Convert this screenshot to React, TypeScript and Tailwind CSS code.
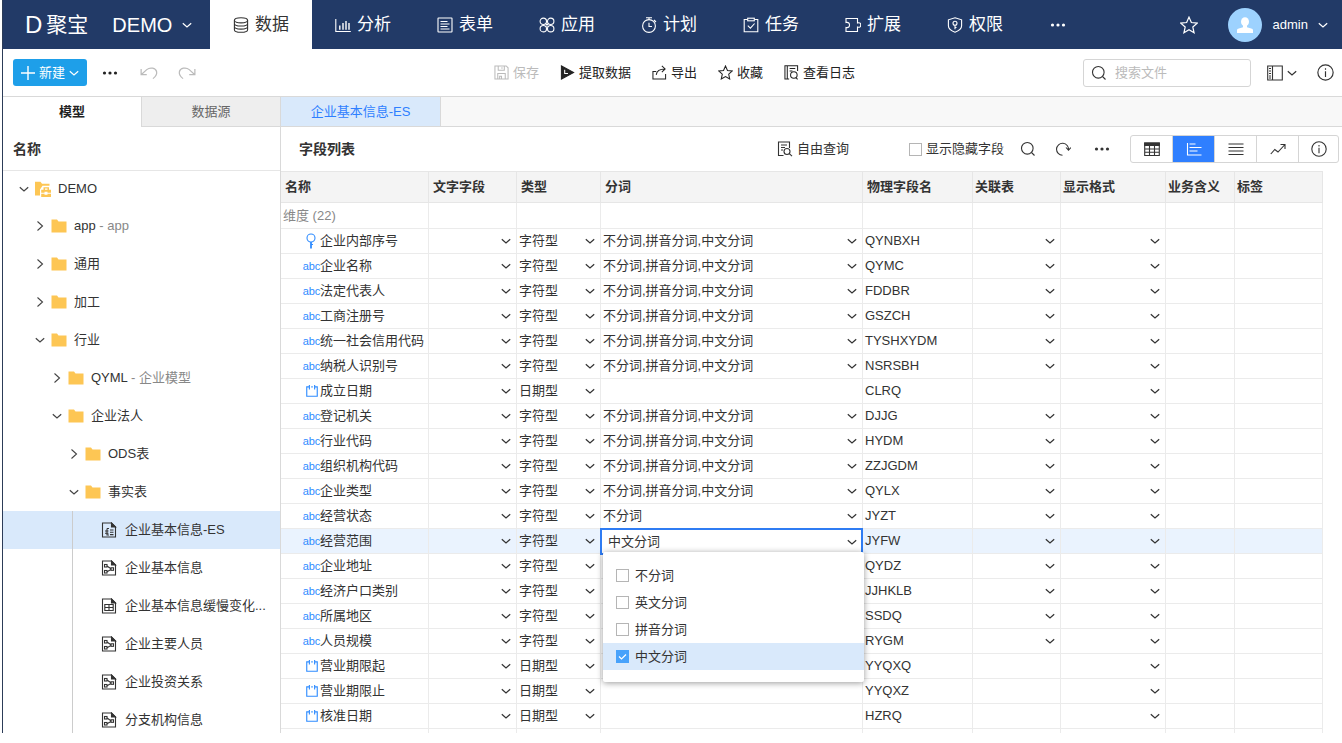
import type { ReactNode } from "react";
import clsx from "clsx";

type IconProps = {
  className?: string;
  children?: ReactNode;
};

const Icon = ({ className = "size-4", children }: IconProps) => (
  <svg
    viewBox="0 0 16 16"
    fill="none"
    stroke="currentColor"
    strokeWidth="1.1"
    aria-hidden="true"
    className={clsx("shrink-0", className)}
  >
    {children}
  </svg>
);

const ChevronDown = ({ className = "size-2.5" }: IconProps) => (
  <svg
    viewBox="0 0 10 10"
    fill="none"
    stroke="currentColor"
    strokeWidth="1.2"
    aria-hidden="true"
    className={clsx("shrink-0", className)}
  >
    <path d="M.8 3.2L5 7l4.2-3.800" />
  </svg>
);

const ChevronRight = () => (
  <svg
    viewBox="0 0 10 10"
    fill="none"
    stroke="currentColor"
    strokeWidth="1.1"
    aria-hidden="true"
    className="size-2.5 shrink-0"
  >
    <path d="M2.500.5L7.500 5l-5 4.500" />
  </svg>
);

const DotsIcon = () => (
  <Icon>
    <g fill="currentColor" stroke="none">
      <circle cx="2.5" cy="8" r="1.6" />
      <circle cx="8" cy="8" r="1.6" />
      <circle cx="13.5" cy="8" r="1.6" />
    </g>
  </Icon>
);

const StarIcon = ({ className }: IconProps) => (
  <Icon className={className}>
    <path d="M8 1l2.1 4.8 5.2.5-3.9 3.5 1.1 5.1L8 12.3l-4.5 2.6 1.1-5.1L.7 6.3l5.2-.5z" />
  </Icon>
);

const SearchIcon = () => (
  <Icon>
    <circle cx="7.3" cy="7.3" r="5.8" />
    <path d="M11.5 11.5l3 3" />
  </Icon>
);

const InfoIcon = ({ className }: IconProps) => (
  <Icon className={className}>
    <circle cx="8" cy="8" r="7.2" />
    <path d="M8 6.8v5.4M8 4v1.4" />
  </Icon>
);

const navItems = [
  {
    label: "数据",
    active: true,
    icon: (
      <>
        <ellipse cx="8" cy="3.3" rx="6.6" ry="2.6" />
        <path d="M1.4 3.3v9.4c0 1.4 3 2.6 6.6 2.6s6.6-1.2 6.6-2.6V3.3M1.4 6.4c0 1.4 3 2.6 6.6 2.6s6.6-1.2 6.6-2.6M1.4 9.5c0 1.4 3 2.6 6.6 2.6s6.6-1.2 6.6-2.6" />
      </>
    ),
  },
  {
    label: "分析",
    icon: (
      <>
        <path d="M.8 2v12.5h15" />
        <path d="M4.8 8.5v4.3M8 6v6.8M11 4v8.800M14 6v6.800" strokeWidth="1.4" />
      </>
    ),
  },
  {
    label: "表单",
    icon: (
      <>
        <rect x="1" y="1" width="14" height="14" rx=".5" />
        <path d="M3.5 4.500h7M3.500 7h9M3.500 9.500h7M3.500 12h9" />
      </>
    ),
  },
  {
    label: "应用",
    icon: (
      <>
        <circle cx="4.3" cy="4.3" r="3.2" />
        <circle cx="11.7" cy="4.3" r="3.2" />
        <circle cx="4.3" cy="11.7" r="3.2" />
        <circle cx="11.7" cy="11.7" r="3.2" />
        <path d="M6.500 6.500l3 3M9.500 6.500l-3 3" />
      </>
    ),
  },
  {
    label: "计划",
    icon: (
      <>
        <circle cx="8" cy="9" r="6.4" />
        <path d="M5 .8h6M8 .8v1.800M8 5.800v3.700h3M13 3l2 2" />
      </>
    ),
  },
  {
    label: "任务",
    icon: (
      <>
        <path d="M4.500 2.500H1.200v12.300h13.600V2.500h-3.300" />
        <rect x="4.7" y="1.2" width="6.6" height="2.6" />
        <path d="M4.800 8.600l2.600 2.500 4.200-4.600" />
      </>
    ),
  },
  {
    label: "扩展",
    icon: (
      <path d="M1 5.500V1.500h11.500V6c2.600-.8 3.200.5 3.200 2s-.6 2.800-3.200 2v4.500H1V10.500c2.800.5 3.500-1 3.500-2.500S3.800 5 1 5.500z" />
    ),
  },
  {
    label: "权限",
    icon: (
      <>
        <path d="M8 .8l6.600 2v6c0 3-3.600 5.400-6.600 6.400-3-1-6.600-3.400-6.600-6.400v-6z" />
        <circle cx="8" cy="6.3" r="2" />
        <path d="M8 8.300v4M8 10.500h1.500" />
      </>
    ),
  },
];

const actions = [
  {
    label: "保存",
    disabled: true,
    icon: <path d="M1 1h12l2 2v12H1zM4.500 1v4.500h6.500V1M4 15V9h8v6M8.500 2.500v1.500M6 15v-3h2v3" />,
  },
  {
    label: "提取数据",
    icon: (
      <>
        <path d="M1.500 1v14l13-7z" fill="currentColor" />
        <path d="M5 5v4h3.500" stroke="#fff" />
      </>
    ),
  },
  {
    label: "导出",
    icon: (
      <path d="M4.500 7H1v8h13.500V9.500M4.500 10.500C5 6.500 8 4.200 14 4.200M10.500 1L14 4.200l-3.500 3.300" />
    ),
  },
  {
    label: "收藏",
    icon: <path d="M8 1l2.100 4.800 5.200.5-3.900 3.500 1.100 5.100L8 12.300l-4.500 2.600 1.100-5.100L.7 6.300l5.200-.5z" />,
  },
  {
    label: "查看日志",
    icon: (
      <>
        <path d="M5.500 15H1V.8h13.500v5.700M3.500.8V15M6 3.800h6M6 6.300h3" />
        <circle cx="10.5" cy="10.7" r="3.5" />
        <path d="M12.700 13.400l1.800 2" />
      </>
    ),
  },
];

const Header = () => (
  <header className="flex h-[49px] shrink-0 items-stretch bg-[#223a67] text-white">
    <div className="flex w-[207px] shrink-0 items-center pl-[22px]">
      <span className="text-2xl leading-none">D</span>
      <span className="pl-1 text-[21px] leading-none">聚宝</span>
      <button type="button" className="flex items-center gap-2.5 pl-6 text-xl">
        DEMO
        <ChevronDown />
      </button>
    </div>
    <nav className="flex">
      {navItems.map((item) => (
        <a
          key={item.label}
          href="#"
          className={clsx(
            "flex w-[102px] items-center justify-center gap-1.5 text-[17px]",
            item.active && "bg-white text-[#333]"
          )}
        >
          <Icon>{item.icon}</Icon>
          {item.label}
        </a>
      ))}
      <button type="button" aria-label="更多" className="flex w-16 items-center justify-center">
        <DotsIcon />
      </button>
    </nav>
    <div className="ml-auto flex items-center pr-3.5">
      <button type="button" aria-label="收藏夹">
        <StarIcon className="size-[18px]" />
      </button>
      <span className="ml-[30px] flex size-[34px] items-center justify-center rounded-full bg-[#9dd2fe]">
        <svg viewBox="0 0 16 16" fill="#fff" aria-hidden="true" className="size-4">
          <ellipse cx="8" cy="4.8" rx="4" ry="4.6" />
          <path d="M6 8h4v2.200l5 1.600c.7.3 1 .8 1 1.700V16H0v-2.500c0-.9.300-1.400 1-1.700l5-1.600z" />
        </svg>
      </span>
      <button type="button" className="ml-[11px] flex items-center gap-2.5 text-[13px]">
        admin
        <ChevronDown />
      </button>
    </div>
  </header>
);

const Toolbar = () => (
  <div className="grid h-[47px] shrink-0 grid-cols-[1fr_auto_1fr] items-center">
    <div className="flex items-center pl-2.5 text-[#222]">
      <button
        type="button"
        className="flex h-[27px] w-[74px] items-center justify-center gap-1 rounded-[3px] bg-[#1e9fe9] text-[13px] text-white"
      >
        <Icon className="size-3.5">
          <path d="M8 0v16M0 8h16" strokeWidth="1.6" />
        </Icon>
        新建
        <ChevronDown />
      </button>
      <button type="button" aria-label="更多操作" className="ml-[15px]">
        <DotsIcon />
      </button>
      <button type="button" aria-label="撤销" disabled className="ml-[22px] text-[#bbb]">
        <Icon className="size-[18px]">
          <path d="M1 4.500V9.500h5M1 9.500l5-4.500c3-2.500 8-1.500 8.800 2 .5 3-1.300 4.500-3.300 6" />
        </Icon>
      </button>
      <button type="button" aria-label="重做" disabled className="ml-5 text-[#bbb]">
        <Icon className="size-[18px]">
          <path d="M15 4.500V9.500h-5M15 9.500L10 5C7 2.500 2 3.500 1.200 7c-.5 3 1.300 4.500 3.300 6" />
        </Icon>
      </button>
    </div>
    <div className="flex gap-[21px] pl-1">
      {actions.map((action) => (
        <button
          key={action.label}
          type="button"
          disabled={action.disabled}
          className={clsx(
            "flex items-center gap-1 text-[13px]",
            action.disabled ? "text-[#bbb]" : "text-[#222]"
          )}
        >
          <Icon className="size-[15px]">{action.icon}</Icon>
          {action.label}
        </button>
      ))}
    </div>
    <div className="flex items-center justify-end pr-2 text-[#333]">
      <label className="flex h-7 w-[168px] items-center gap-2 rounded-[3px] border border-[#d5d5d5] pl-[7px]">
        <SearchIcon />
        <input
          type="text"
          aria-label="搜索文件"
          placeholder="搜索文件"
          className="w-full min-w-0 text-[13px] outline-none placeholder:text-[#bbb]"
        />
      </label>
      <button type="button" aria-label="布局" className="ml-4 flex items-center gap-1">
        <Icon>
          <path d="M.7 1h14.600v14H.7zM5.500 1v14M2 3.500h2M2 6h2M2 8.500h2M2 11h2M2 13h2" />
        </Icon>
        <ChevronDown />
      </button>
      <button type="button" aria-label="信息" className="ml-5">
        <InfoIcon className="size-[17px]" />
      </button>
    </div>
  </div>
);

type Folder = {
  name: string;
  note?: string;
  depth: number;
  open?: boolean;
};

const folders: Folder[] = [
  { name: "DEMO", depth: 0, open: true },
  { name: "app", note: "app", depth: 1 },
  { name: "通用", depth: 1 },
  { name: "加工", depth: 1 },
  { name: "行业", depth: 1, open: true },
  { name: "QYML", note: "企业模型", depth: 2 },
  { name: "企业法人", depth: 2, open: true },
  { name: "ODS表", depth: 3 },
  { name: "事实表", depth: 3, open: true },
];

const indents = ["h-9 pl-4", "h-[38px] pl-8", "h-[38px] pl-[49px]", "h-[38px] pl-[66px]"];

const FolderIcon = () => (
  <svg viewBox="0 0 16 16" fill="#fdc654" aria-hidden="true" className="size-4 shrink-0">
    <path d="M.5 1.500h5.500l1.500 2h8V14.500H.5z" />
  </svg>
);

const ProjectIcon = () => (
  <svg viewBox="0 0 16 16" fill="#fdc654" aria-hidden="true" className="size-4 shrink-0">
    <path d="M0 .8h5.500l1.500 2h7.500v2H7.500L5 8.500v6H0z" />
    <path d="M6.200 8.800h2.300V6.300h5.500v2.500H16v3h-3.500v-1h-3v1H6.200zM10 8.800h2.500V7.600H10zM6.200 12.800h3.300v1h3v-1H16V16H6.200z" />
  </svg>
);

const fileIcons = {
  list: <path d="M6 6.500h2M9 8h3.500M4 9h3.500M9 10.300h3.500M4 11.300h3.500M9 12.600h3.500M6 6.500v6.500h2" />,
  link: (
    <>
      <rect x="3.5" y="4.5" width="2.5" height="2.5" />
      <rect x="3.5" y="10.5" width="2.5" height="2.5" />
      <rect x="10" y="7.8" width="2.5" height="2.5" />
      <path d="M6 6l4 2.700M6 11.700l4-2.200" />
    </>
  ),
  grid: <path d="M3.800 6.500h8.400v6H3.800zM3.800 9.500h8.400M8 6.500v6" />,
};

const files: { name: string; icon: keyof typeof fileIcons; selected?: boolean }[] = [
  { name: "企业基本信息-ES", icon: "list", selected: true },
  { name: "企业基本信息", icon: "link" },
  { name: "企业基本信息缓慢变化...", icon: "grid" },
  { name: "企业主要人员", icon: "link" },
  { name: "企业投资关系", icon: "link" },
  { name: "分支机构信息", icon: "link" },
];

const Sidebar = () => (
  <aside className="flex w-[278px] shrink-0 flex-col border-r border-[#d9d9d9]">
    <div className="flex h-[30px] shrink-0 text-[13px]">
      <button type="button" className="flex-1 font-bold text-[#222]">
        模型
      </button>
      <button type="button" className="flex-1 border-b border-l border-[#d9d9d9] bg-[#eee] text-[#666]">
        数据源
      </button>
    </div>
    <h2 className="flex h-11 shrink-0 items-center border-b border-[#e6e6e6] pl-2.5 text-sm font-bold">名称</h2>
    <ul>
      {folders.map((folder) => (
        <li key={folder.name} className={clsx("flex items-center", indents[folder.depth])}>
          <button type="button" aria-label={folder.name} className="text-[#444]">
            {folder.open ? <ChevronDown /> : <ChevronRight />}
          </button>
          <a href="#" className="flex items-center gap-[7px] pl-1.5">
            {folder.depth === 0 ? <ProjectIcon /> : <FolderIcon />}
            <span>
              {folder.name}
              {folder.note && <span className="text-[#888]"> - {folder.note}</span>}
            </span>
          </a>
        </li>
      ))}
      {files.map((file) => (
        <li key={file.name} className={clsx("flex h-[38px] items-center", file.selected && "bg-[#d9e9fb]")}>
          <span className="w-[70px] self-stretch border-r border-[#ccc]" />
          <a href="#" className="flex items-center gap-2 pl-7">
            <Icon>
              <path d="M1.500 1h9l4 4v10h-13z" />
              <path d="M10.500 1v4h4z" fill="currentColor" />
              {fileIcons[file.icon]}
            </Icon>
            {file.name}
          </a>
        </li>
      ))}
    </ul>
  </aside>
);

const views = [
  {
    label: "表格",
    icon: (
      <>
        <path d="M.7 2h14.600v12.500H.7zM.7 8h14.600M.7 11.200h14.600M5.500 2v12.500M10.500 2v12.500" />
        <path d="M.7 2h14.600v2.500H.7z" fill="currentColor" />
      </>
    ),
  },
  { label: "字段", active: true, icon: <path d="M1.500 2v12.500M3.500 3h6M3.500 6.500h12M3.500 10h8M1.500 14h14" /> },
  { label: "列表", icon: <path d="M.5 3h15M.5 6.500h15M.5 10h15M.5 13.500h15" /> },
  { label: "趋势", icon: <path d="M.8 13l4-4.500 3.200 2.500L14.500 4M10.500 3.500h4.500V8" /> },
  {
    label: "详情",
    icon: (
      <>
        <circle cx="8" cy="8" r="7.2" />
        <path d="M8 6.800v5.400M8 4v1.400" />
      </>
    ),
  },
];

const CheckBox = ({ label, checked }: { label: string; checked?: boolean }) => (
  <>
    <span className="grid">
      <input
        type="checkbox"
        aria-label={label}
        defaultChecked={checked}
        className="peer col-start-1 row-start-1 size-[13px] appearance-none border border-[#b5b5b5] bg-white checked:border-[#48a2fb] checked:bg-[#48a2fb]"
      />
      <svg
        viewBox="0 0 13 13"
        fill="none"
        stroke="#fff"
        strokeWidth="1.2"
        aria-hidden="true"
        className="pointer-events-none invisible col-start-1 row-start-1 size-[13px] peer-checked:visible"
      >
        <path d="M3 6.500l2.500 2.500L10 4.500" />
      </svg>
    </span>
    {label}
  </>
);

const PanelHeader = () => (
  <div className="flex h-11 shrink-0 items-center pr-[3px] pl-[18px]">
    <h2 className="text-sm font-bold">字段列表</h2>
    <button type="button" className="ml-auto flex items-center gap-1">
      <Icon>
        <path d="M6.500 14.500H1.500V1h11v6M4 4h6M4 6.500h4M4 9h2" />
        <circle cx="10" cy="10.5" r="3" />
        <path d="M12.300 12.700l2.700 2.500" />
      </Icon>
      自由查询
    </button>
    <label className="ml-[60px] flex items-center gap-1">
      <CheckBox label="显示隐藏字段" />
    </label>
    <button type="button" aria-label="搜索" className="ml-4">
      <SearchIcon />
    </button>
    <button type="button" aria-label="刷新" className="ml-[19px]">
      <Icon>
        <path d="M7.500 14.300A6 6 0 1 1 13.500 9M11 6.500l2.500 2.700L16 6.500" />
      </Icon>
    </button>
    <button type="button" aria-label="更多" className="ml-[23px]">
      <DotsIcon />
    </button>
    <div className="ml-5 flex h-7 rounded-[3px] border border-[#d5d5d5]">
      {views.map((view) => (
        <button
          key={view.label}
          type="button"
          aria-label={view.label}
          className={clsx(
            "flex w-[42px] items-center justify-center border-l border-[#d5d5d5] first:w-[41px] first:border-l-0 last:w-10",
            view.active && "bg-[#2f7fff] text-white"
          )}
        >
          <Icon>{view.icon}</Icon>
        </button>
      ))}
    </div>
  </div>
);

type Field = {
  name: string;
  code: string;
  kind?: "key" | "date";
  split?: string;
  editing?: boolean;
};

const ALL_SPLITS = "不分词,拼音分词,中文分词";

const fields: Field[] = [
  { name: "企业内部序号", code: "QYNBXH", kind: "key", split: ALL_SPLITS },
  { name: "企业名称", code: "QYMC", split: ALL_SPLITS },
  { name: "法定代表人", code: "FDDBR", split: ALL_SPLITS },
  { name: "工商注册号", code: "GSZCH", split: ALL_SPLITS },
  { name: "统一社会信用代码", code: "TYSHXYDM", split: ALL_SPLITS },
  { name: "纳税人识别号", code: "NSRSBH", split: ALL_SPLITS },
  { name: "成立日期", code: "CLRQ", kind: "date" },
  { name: "登记机关", code: "DJJG", split: ALL_SPLITS },
  { name: "行业代码", code: "HYDM", split: ALL_SPLITS },
  { name: "组织机构代码", code: "ZZJGDM", split: ALL_SPLITS },
  { name: "企业类型", code: "QYLX", split: ALL_SPLITS },
  { name: "经营状态", code: "JYZT", split: "不分词" },
  { name: "经营范围", code: "JYFW", split: "中文分词", editing: true },
  { name: "企业地址", code: "QYDZ" },
  { name: "经济户口类别", code: "JJHKLB" },
  { name: "所属地区", code: "SSDQ" },
  { name: "人员规模", code: "RYGM" },
  { name: "营业期限起", code: "YYQXQ", kind: "date" },
  { name: "营业期限止", code: "YYQXZ", kind: "date" },
  { name: "核准日期", code: "HZRQ", kind: "date" },
];

const columns = [
  { title: "名称", style: "w-[148px] pl-1" },
  { title: "文字字段", style: "w-[88px] pl-1" },
  { title: "类型", style: "w-[84px] pl-1" },
  { title: "分词", style: "w-[262px] pl-1" },
  { title: "物理字段名", style: "w-[110px] pl-1" },
  { title: "关联表", style: "w-[88px] pl-0.5" },
  { title: "显示格式", style: "w-[105px] pl-0.5" },
  { title: "业务含义", style: "w-[69px] pl-0.5" },
  { title: "标签", style: "w-[88px] pl-0.5" },
];

const splitOptions = ["不分词", "英文分词", "拼音分词", "中文分词"];

const cell = "border-r border-b border-[#ebebeb] p-0";

const FieldIcon = ({ kind }: { kind?: "key" | "date" }) => {
  if (kind === "key") {
    return (
      <Icon className="size-4 text-[#2f8cff]">
        <circle cx="7" cy="5" r="4" />
        <path d="M7 9v6.500" strokeWidth="1.8" />
        <path d="M7 11.500h2" />
      </Icon>
    );
  }
  if (kind === "date") {
    return (
      <Icon className="size-3 text-[#2f8cff]">
        <path d="M4.500 2.500H1V15h14V2.500h-3.500M7 2.500h2M4.500 0v6M11.500 0v6" strokeWidth="1.5" />
      </Icon>
    );
  }
  return <span className="text-[11px] text-[#2f8cff]">abc</span>;
};

const CellSelect = ({ label, value = "" }: { label: string; value?: string }) => (
  <div className="grid items-center">
    <select
      aria-label={label}
      defaultValue={value}
      className="col-start-1 row-start-1 h-6 w-full appearance-none pl-0.5 outline-none"
    >
      <option value={value}>{value}</option>
    </select>
    <ChevronDown className="pointer-events-none col-start-1 row-start-1 mr-[5px] size-2.5 justify-self-end" />
  </div>
);

const SplitEditor = ({ value }: { value: string }) => (
  <>
    <button
      type="button"
      aria-haspopup="true"
      aria-expanded="true"
      className="absolute -inset-x-px -top-px flex h-[27px] items-center justify-between border-2 border-[#2f7cf3] bg-white pr-1 pl-1.5"
    >
      {value}
      <ChevronDown />
    </button>
    <div className="absolute top-[23px] -right-0.5 left-0.5 z-10 rounded-[2px] bg-white pt-2.5 pb-3 shadow-[0_1px_6px_rgba(0,0,0,0.4)]">
      {splitOptions.map((option) => (
        <label
          key={option}
          className={clsx("flex h-[27px] items-center gap-1.5 pl-[13px]", option === value && "bg-[#d9e9fb]")}
        >
          <CheckBox label={option} checked={option === value} />
        </label>
      ))}
    </div>
  </>
);

const FieldRow = ({ field }: { field: Field }) => (
  <tr className={clsx("h-[25px]", field.editing && "bg-[#eaf3fe]")}>
    <td className={cell}>
      <div className="flex h-6 items-center pl-[22px] whitespace-nowrap">
        <span className="flex w-[17px] shrink-0 justify-center">
          <FieldIcon kind={field.kind} />
        </span>
        {field.name}
      </div>
    </td>
    <td className={cell}>
      <CellSelect label={field.name + " 文字字段"} />
    </td>
    <td className={cell}>
      <CellSelect label={field.name + " 类型"} value={field.kind === "date" ? "日期型" : "字符型"} />
    </td>
    <td className={clsx(cell, "relative")}>
      {field.editing && field.split && <SplitEditor value={field.split} />}
      {!field.editing && field.split && (
        <button type="button" className="flex h-6 w-full items-center justify-between pr-[5px] pl-0.5">
          {field.split}
          <ChevronDown />
        </button>
      )}
    </td>
    <td className={clsx(cell, "pl-0.5")}>{field.code}</td>
    <td className={cell}>{field.kind !== "date" && <CellSelect label={field.name + " 关联表"} />}</td>
    <td className={cell}>
      <CellSelect label={field.name + " 显示格式"} />
    </td>
    <td className={cell} />
    <td className={cell} />
  </tr>
);

const FieldTable = () => (
  <div className="pr-[19px]">
    <table className="w-full table-fixed border-separate border-spacing-0 leading-6">
      <thead>
        <tr className="h-8 bg-[#f4f4f4] text-left">
          {columns.map((column) => (
            <th
              key={column.title}
              className={clsx(
                "border-t border-r border-b border-[#e6e6e6] py-0 pr-0 font-bold whitespace-nowrap",
                column.style
              )}
            >
              {column.title}
            </th>
          ))}
        </tr>
      </thead>
      <tbody>
        <tr className="h-[26px]">
          <td className={clsx(cell, "pl-0.5 text-[#888]")}>维度 (22)</td>
          {columns.slice(1).map((column) => (
            <td key={column.title} className={cell} />
          ))}
        </tr>
        {fields.map((field) => (
          <FieldRow key={field.code} field={field} />
        ))}
        <tr className="h-[25px]">
          {columns.map((column) => (
            <td key={column.title} className={cell} />
          ))}
        </tr>
      </tbody>
    </table>
  </div>
);

const App = () => {
  return (
    <div className="h-screen overflow-hidden bg-white pb-2.5 pl-0.5 font-['Liberation_Sans','Noto_Sans_CJK_SC',sans-serif] text-[13px] text-[#333]">
      <div className="flex h-full flex-col overflow-hidden border-l border-[#2c3c58]">
        <Header />
        <Toolbar />
        <div className="flex min-h-0 flex-1 overflow-hidden border-t border-[#d9d9d9]">
          <Sidebar />
          <main className="flex min-w-0 flex-1 flex-col">
            <div className="flex h-[30px] shrink-0 border-b border-[#d9d9d9] bg-[#f8f8f8]">
              <button type="button" className="w-40 border-r border-[#d9d9d9] bg-[#d9e9fb] text-[#2f7fff]">
                企业基本信息-ES
              </button>
            </div>
            <PanelHeader />
            <FieldTable />
          </main>
        </div>
      </div>
    </div>
  );
};

export default App;
